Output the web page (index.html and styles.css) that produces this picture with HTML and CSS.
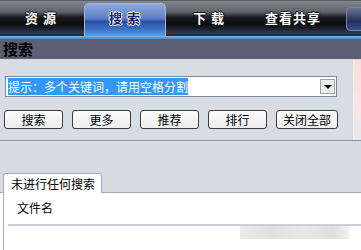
FILE: index.html
```html
<!DOCTYPE html>
<html lang="zh">
<head>
    <meta charset="UTF-8">
    <title>搜索</title>
    <link rel="stylesheet" href="styles.css">
</head>
<body>
    <!-- Top navigation -->
    <div class="tabbar">
        <div class="nav-tab">资 源</div>
        <div class="nav-tab active">搜 索</div>
        <div class="nav-tab">下 载</div>
        <div class="nav-tab">查看共享</div>
        <div class="nav-tab edge"></div>
    </div>
    <div class="tabline"></div>

    <div class="title">搜索</div>

    <!-- Search form -->
    <div class="panel">
        <div class="search-area">
            <div class="combo">
                <span class="combo-text"><span class="selected">提示：多个关键词，请用空格分割</span></span>
                <span class="combo-btn"><span class="arrow"></span></span>
            </div>
            <div class="buttons">
                <div class="btn">搜索</div>
                <div class="btn">更多</div>
                <div class="btn">推荐</div>
                <div class="btn">排行</div>
                <div class="btn wide">关闭全部</div>
            </div>
        </div>
        <div class="side"></div>
    </div>

    <!-- Results -->
    <div class="results">
        <div class="result-tabs">
            <div class="result-tab">未进行任何搜索</div>
        </div>
        <div class="result-body">
            <div class="col-head">文件名</div>
            <div class="blur"></div>
        </div>
    </div>
</body>
</html>
```

FILE: styles.css
```css
body {
    margin: 0;
    font-family: "Noto Sans CJK SC", "DejaVu Sans", sans-serif;
    background-color: #fff;
    width: 361px;
    height: 250px;
    overflow: hidden;
}

.tabbar {
    height: 36px;
    display: flex;
    gap: 2px;
    background: linear-gradient(#2a2c34 0px, #84888f 1px, #5e6169 12px, #1a1c22 17px, #0b0c10 24px, #1c2230 29px, #343c52 33px, #1e2230 36px);
    overflow: hidden;
}

.nav-tab {
    width: 82px;
    flex-shrink: 0;
    height: 36px;
    line-height: 36px;
    text-align: center;
    color: #fff;
    font-size: 13px;
    font-weight: bold;
    letter-spacing: 1px;
    text-shadow: 1px 0 0 #111, -1px 0 0 #111, 0 1px 0 #111, 0 -1px 0 #111;
    box-sizing: border-box;
}

.nav-tab.active {
    margin-top: 3px;
    height: 33px;
    line-height: 28px;
    border: 1px solid #a4b4d2;
    border-bottom: none;
    border-radius: 5px 5px 0 0;
    background: linear-gradient(#8ea8dc, #5e80c6 45%, #2a50a4 55%, #3a74c8 80%, #58a2e4);
    color: #142070;
    text-shadow: 1px 0 0 #fff, -1px 0 0 #fff, 0 1px 0 #fff, 0 -1px 0 #fff;
}

.nav-tab.edge {
    margin-left: 10px;
    margin-top: 7px;
    height: 24px;
    border: 1px solid #7a86a0;
    border-radius: 4px;
    background: linear-gradient(#6a7490, #24305a 60%, #34508a);
}

.tabline {
    height: 3px;
    background: linear-gradient(#8ab4e0, #4a84c4);
}

.title {
    height: 20px;
    line-height: 20px;
    background-color: #5b5f71;
    padding-left: 3px;
    font-size: 15px;
    font-weight: bold;
    color: #000;
}

.panel {
    display: flex;
    height: 81px;
    background-color: #d8dde3;
    border-bottom: 1px solid #8e9298;
}

.search-area {
    flex: 1;
    padding: 17px 0 0 4px;
}

.combo {
    margin-left: 1px;
    width: 332px;
    height: 21px;
    box-sizing: border-box;
    border: 1px solid #7f8a96;
    background-color: #fff;
    display: flex;
    align-items: center;
    padding: 0 1px 0 2px;
}

.combo-text {
    flex: 1;
    font-size: 12px;
    line-height: 15px;
}

.selected {
    background-color: #3298fe;
    color: #fff;
}

.combo-btn {
    width: 15px;
    height: 15px;
    box-sizing: border-box;
    border: 1px solid #9ea4aa;
    background-color: #eceef0;
    display: flex;
    justify-content: center;
    align-items: center;
}

.arrow {
    width: 0;
    height: 0;
    border-left: 4px solid transparent;
    border-right: 4px solid transparent;
    border-top: 4px solid #000;
}

.buttons {
    display: flex;
    gap: 9px;
    margin-top: 13px;
}

.btn {
    width: 59px;
    height: 19px;
    box-sizing: border-box;
    border: 1px solid #3c3c3c;
    border-radius: 3px;
    background: linear-gradient(#fbfbfb, #eeeef0);
    font-size: 12px;
    line-height: 17px;
    text-align: center;
    color: #000;
}

.btn.wide {
    width: 62px;
}

.side {
    width: 7px;
    margin-top: 1px;
    border-left: 1px solid #eef0f4;
    background: linear-gradient(#fcdcdc, #fce4e4 60%, #e4e8f0);
}

.results {
    height: 108px;
}

.result-tabs {
    height: 51px;
    background-color: #d6dbe1;
    display: flex;
    align-items: flex-end;
    padding-left: 3px;
    border-bottom: 1px solid #a8acb2;
}

.result-tab {
    width: 99px;
    height: 20px;
    box-sizing: border-box;
    border: 1px solid #a8acb2;
    border-bottom: none;
    border-radius: 3px 3px 0 0;
    background-color: #fff;
    font-size: 12px;
    line-height: 19px;
    padding-left: 7px;
    margin-bottom: -1px;
}

.result-body {
    margin-left: 3px;
    border-left: 1px solid #a8acb2;
    height: 60px;
    background-color: #fff;
    position: relative;
}

.col-head {
    font-size: 12px;
    line-height: 16px;
    padding: 7px 0 0 9px;
    height: 24px;
    margin-left: 4px;
    border-bottom: 2px solid #c8d0dc;
}

.blur {
    position: absolute;
    left: 236px;
    top: 33px;
    width: 110px;
    height: 13px;
    background: linear-gradient(to right, #e6e6e6, #d8d8d8 30%, #e2e2e2 60%, #d6d6d6 85%, #f0f0f0);
    opacity: 0.8;
}
```
